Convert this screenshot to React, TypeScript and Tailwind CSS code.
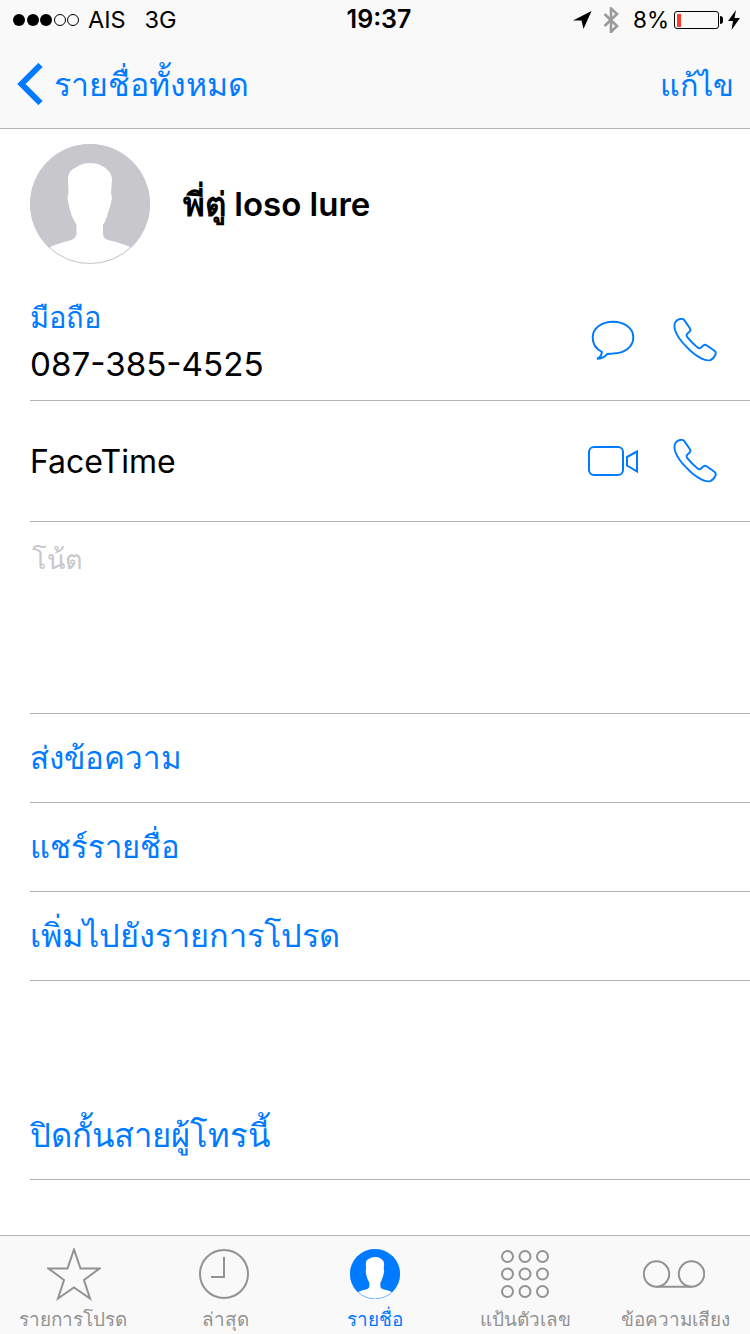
const blue = "#007aff"

function Phone() {
  return (
    <svg width="44" height="44" viewBox="0 0 46 46" fill="none" stroke="#007aff" strokeWidth="2" strokeLinejoin="round">
      <path d="M1.5 8 C1.5 5 4 2.5 6 1.5 C8 0.5 10.5 0.5 12 2.5 L17.5 10.5 C18.5 12 18.5 13 17.5 14 L14.5 17 C14 17.8 14 18.5 15 20 C18 24 21 27 26 31 C27 31.8 28 31.8 29 31 L32 28.5 C33 27.8 34 27.8 35 28.5 L43 34 C44.5 35 45 36.5 44.5 38 C43.5 40.5 41.5 43 39 44 C36 44.8 33 44 30 42.5 C24 39.5 18.5 35 14 30 C8 24 4 18 2.3 13 C1.7 11 1.5 9.5 1.5 8 Z" />
    </svg>
  )
}

// head and shoulders, runs past the circle and gets clipped by it
function Silhouette({ id, bg, line }: { id: string; bg: string; line: string }) {
  return (
    <>
      <clipPath id={id}>
        <circle cx="60" cy="60" r="60" />
      </clipPath>
      <circle cx="60" cy="60" r="60" fill={bg} />
      <path
        clipPath={`url(#${id})`}
        fill="#fff"
        d="M60 19 C54 19 49 21 45 24 C40 26 38 30 38 36 L38.5 48 L37.5 54 C38.5 60 40 66 41.5 71 C43 75 45 78 46.5 81 L46.5 90 C46 93 44 95 41.5 96 C34 98 26 100 18 104 L18 125 L102 125 L102 104 C94 100 86 98 78 96 C75 95 73 93 73 90 L73 81 C75 78 76 75 77.5 71 C79 66 81 60 82 54 L81 48 L82 36 C82 30 78 25 73.3 22.7 C69 20 65 19 60 19 Z"
      />
      <circle cx="60" cy="60" r="59.5" fill="none" stroke={line} strokeWidth="1" />
    </>
  )
}

function TabLabel({ text, active, shift }: { text: string; active?: boolean; shift?: string }) {
  return (
    <span className={`absolute top-[71px] left-0 right-0 text-center text-[18.9px] leading-[26px] ${shift ?? ""} ${active ? "text-[#007aff] font-medium" : "text-[#929292]"}`}>
      {text}
    </span>
  )
}

function ActionRow({ text, size }: { text: string; size: string }) {
  return (
    <div className={`ml-[30px] flex h-[89px] items-center border-b border-[#b2b2b2] pt-[1px] text-[#007aff] ${size}`}>
      {text}
    </div>
  )
}

export default function App() {
  return (
    <div
      className="relative h-[1334px] w-[750px] overflow-hidden bg-white"
      style={{ fontFamily: 'Inter, "Noto Sans", Roboto, sans-serif' }}
    >
      <div className="h-[129px] border-b border-[#b2b2b2] bg-[#f9f9f9]">
        {/* Status bar */}
        <div className="flex h-[40px] items-center justify-between pl-[13px] pr-[10px] text-[24px] text-black">
          <div className="flex w-[240px] items-center">
            <div className="flex gap-[1.5px]">
              {[1, 2, 3].map((i) => (
                <span key={i} className="h-[12px] w-[12px] rounded-full bg-black" />
              ))}
              {[4, 5].map((i) => (
                <span key={i} className="h-[12px] w-[12px] rounded-full border border-black" />
              ))}
            </div>
            <span className="ml-[9px] text-[23.5px]">AIS</span>
            <span className="ml-[19px] text-[23.5px]">3G</span>
          </div>
          <span className="ml-[5px] text-[25px] font-semibold">19:37</span>
          <div className="flex w-[240px] items-center justify-end">
            <svg width="19" height="18" viewBox="0 0 19 18" className="mr-[11px]">
              <path d="M18.5 0 L0 9.5 L8.5 9.5 L10.5 18 Z" fill="#000" />
            </svg>
            <svg width="16" height="26" viewBox="0 0 16 26" fill="none" stroke="#9b9b9b" strokeWidth="2.6" className="mr-[14px]">
              <path d="M1.5 7 L14 19 L8 25 V1.5 L14 7 L1.5 19" />
            </svg>
            <span className="text-[22.5px]">8%</span>
            <div className="ml-[5px] flex h-[18px] w-[45px] items-center rounded-[3px] border border-black p-[1.5px]">
              <span className="h-full w-[4px] bg-[#ff3b30]" />
            </div>
            <span className="ml-[1px] h-[8px] w-[3px] rounded-r-full bg-black" />
            <svg width="12" height="20" viewBox="0 0 12 20" className="ml-[5px]">
              <path d="M8 0 L0 11 H5 L3.5 20 L12 8 H6.5 Z" fill="#000" />
            </svg>
          </div>
        </div>
        {/* Nav bar */}
        <div className="flex h-[88px] items-center justify-between pl-[17px] pr-[16px] text-[#007aff]">
          <div className="flex items-center">
            <svg width="26" height="42" viewBox="0 0 26 42" fill="none" stroke="#007aff" strokeWidth="6">
              <path d="M23.5 2 L4.5 21 L23.5 40" />
            </svg>
            <span className="ml-[11px] pt-[1px] text-[32px]">รายชื่อทั้งหมด</span>
          </div>
          <span className="pt-[1px] text-[30.5px]">แก้ไข</span>
        </div>
      </div>

      {/* Contact header */}
      <div className="flex h-[151px] items-start pl-[30px] pt-[15px]">
        <svg width="120" height="120" viewBox="0 0 120 120">
          <Silhouette id="avatar-big" bg="#c7c7cc" line="#c7c7cc" />
        </svg>
        <span className="ml-[33px] mt-[37px] text-[33px] font-semibold leading-[46px] text-black">พี่ตู่ loso lure</span>
      </div>

      {/* Phone */}
      <div className="ml-[30px] flex h-[121px] items-center justify-between border-b border-[#b2b2b2] pr-[33px]">
        <div className="pt-[7px]">
          <div className="text-[29px] leading-[36px] text-[#007aff]">มือถือ</div>
          <div className="mt-[5px] text-[33.2px] leading-[46px] text-black">087-385-4525</div>
        </div>
        <div className="flex items-center gap-[38px]">
          <svg width="44" height="40" viewBox="0 0 44 40" fill="none" stroke={blue} strokeWidth="2">
            <path d="M22 1.7 C33 1.7 42.3 8 42.3 17.5 C42.3 27 33.5 33.2 22 33.5 C20 33.5 18 33.7 16.3 34 C14.5 36 12.5 38.7 6 38.7 C9 37.5 11 35 10.8 31.8 C5 29 1.7 24 1.7 17.5 C1.7 8 11 1.7 22 1.7 Z" />
          </svg>
          <Phone />
        </div>
      </div>

      {/* FaceTime */}
      <div className="ml-[30px] flex h-[121px] items-center justify-between border-b border-[#b2b2b2] pr-[33px] text-[32px] text-black">
        <span className="pt-[2px]">FaceTime</span>
        <div className="flex items-center gap-[35px]">
          <svg width="50" height="30" viewBox="0 0 50 30" fill="none" stroke={blue} strokeWidth="2">
            <rect x="1" y="1" width="34" height="28" rx="5" />
            <path d="M39 11 L49 5.5 V25.5 L39 19.5 Z" />
          </svg>
          <Phone />
        </div>
      </div>

      {/* Note */}
      <div className="ml-[30px] h-[192px] border-b border-[#b2b2b2] pl-[2px] pt-[16px] text-[27px] leading-[44px] text-[#c7c7cc]">โน้ต</div>

      <ActionRow text="ส่งข้อความ" size="text-[31.3px]" />
      <ActionRow text="แชร์รายชื่อ" size="text-[30.9px]" />
      <ActionRow text="เพิ่มไปยังรายการโปรด" size="text-[32.5px]" />

      <div className="mt-[110px]">
        <ActionRow text="ปิดกั้นสายผู้โทรนี้" size="-ml-[1px] text-[32.8px]" />
      </div>

      {/* Tab bar */}
      <div className="absolute bottom-0 left-0 flex h-[99px] w-[750px] border-t border-[#b2b2b2] bg-[#f9f9f9]">
        <div className="relative flex-1">
          <svg width="54" height="54" viewBox="0 0 54 54" className="absolute left-[47px] top-[12px]" fill="none" stroke="#929292" strokeWidth="2">
            <path d="M27 1.5 L33.5 20.5 H52.5 L37 32 L43 50.5 L27 39.5 L11 50.5 L17 32 L1.5 20.5 H20.5 Z" />
          </svg>
          <TabLabel text="รายการโปรด" shift="-translate-x-[2px]" />
        </div>
        <div className="relative flex-1">
          <svg width="50" height="50" viewBox="0 0 50 50" className="absolute left-[49px] top-[13px]" fill="none" stroke="#929292" strokeWidth="2">
            <circle cx="25" cy="25" r="24" />
            <path d="M25 8 V28 H12" />
          </svg>
          <TabLabel text="ล่าสุด" />
        </div>
        <div className="relative flex-1">
          <svg width="50" height="50" viewBox="0 0 120 120" className="absolute left-[50px] top-[13px]">
            <Silhouette id="avatar-tab" bg={blue} line={blue} />
          </svg>
          <TabLabel text="รายชื่อ" active />
        </div>
        <div className="relative flex-1">
          <svg width="48" height="48" viewBox="0 0 48 48" className="absolute left-[51px] top-[14px]" fill="none" stroke="#929292" strokeWidth="2">
            {[6.5, 24, 41.5].map((cy) =>
              [6.5, 24, 41.5].map((cx) => <circle key={`${cx}-${cy}`} cx={cx} cy={cy} r="5.5" />)
            )}
          </svg>
          <TabLabel text="แป้นตัวเลข" />
        </div>
        <div className="relative flex-1">
          <svg width="62" height="28" viewBox="0 0 62 28" className="absolute left-[43px] top-[24px]" fill="none" stroke="#929292" strokeWidth="2">
            <circle cx="13.5" cy="14" r="12.7" />
            <circle cx="48.5" cy="14" r="12.7" />
            <path d="M13.5 26.7 H48.5" />
          </svg>
          <TabLabel text="ข้อความเสียง" />
        </div>
      </div>
    </div>
  )
}
